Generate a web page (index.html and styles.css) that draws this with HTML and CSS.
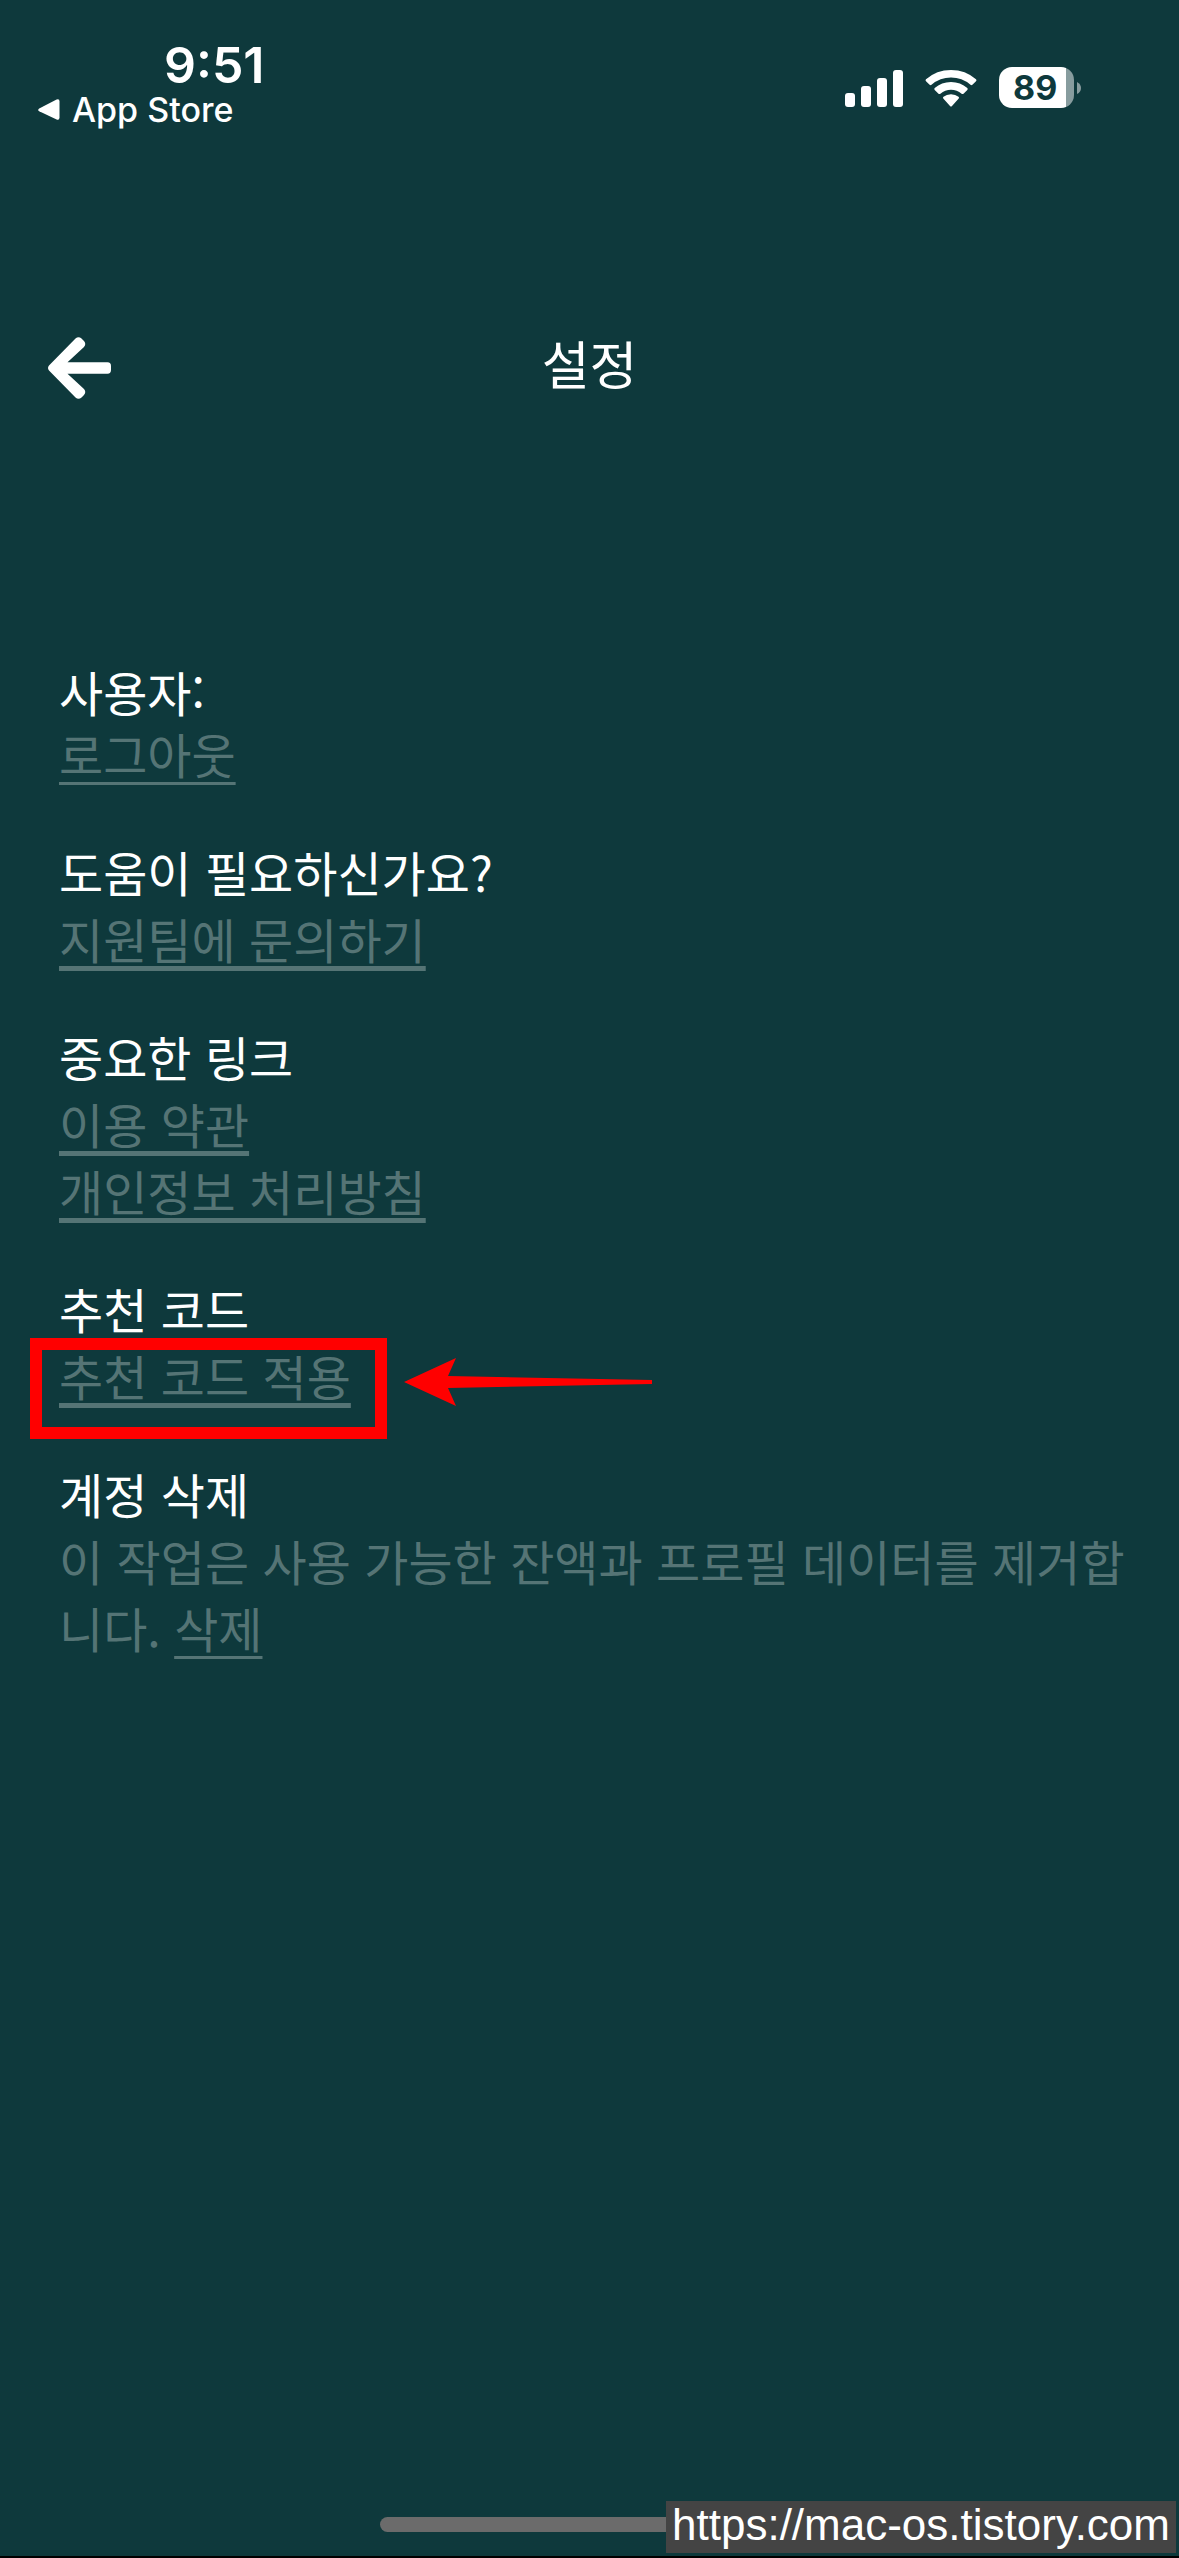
FILE: index.html
```html
<!DOCTYPE html>
<html lang="ko">
<head>
<meta charset="utf-8">
<meta name="viewport" content="width=device-width, initial-scale=1">
<title>설정</title>
<link rel="stylesheet" href="styles.css">
</head>
<body>
<div class="screen">
  <div class="status">
    <div class="status-left">
      <span class="time">9:51</span>
      <a class="return" href="#">
        <svg width="22" height="22" viewBox="0 0 22 22" aria-hidden="true"><path d="M1.2 9.6 18.6.6Q21.5-.4 21.5 2.400V18.600Q21.500 21.600 18.600 20.600L1.200 12.200Q-.8 10.900 1.200 9.600Z" fill="#fff"/></svg>
        <span>App Store</span>
      </a>
    </div>
    <div class="status-right">
      <svg width="58" height="38" viewBox="0 0 58 38" aria-hidden="true" fill="#fff">
        <rect x="0" y="24" width="10" height="14" rx="3"/>
        <rect x="16" y="17" width="10" height="21" rx="3"/>
        <rect x="32" y="9" width="10" height="29" rx="3"/>
        <rect x="48" y="1" width="10" height="37" rx="3"/>
      </svg>
      <svg width="52" height="38" viewBox="0 0 52 38" aria-hidden="true" fill="#fff">
        <path d="M1 10.300Q11.500 1 26 1T51 10.300Q52 11.300 51 12.300L47.400 15.800Q46.500 16.600 45.500 15.700Q37 8.500 26 8.500T6.500 15.700Q5.500 16.600 4.600 15.800L1 12.300Q0 11.300 1 10.300Z"/>
        <path d="M9.700 19Q16.500 13 26 13T42.300 19Q43.200 20 42.300 21L38.500 24.700Q37.600 25.500 36.600 24.700Q32 20.800 26 20.800T15.400 24.700Q14.400 25.500 13.500 24.700L9.700 21Q8.800 20 9.700 19Z"/>
        <path d="M18.500 27.700Q21.500 25.200 26 25.200T33.500 27.700Q34.500 28.700 33.500 29.700L27 37Q26 38.200 25 37L18.500 29.700Q17.500 28.700 18.500 27.700Z"/>
      </svg>
      <div class="battery">
        <span class="battery-level">89</span>
        <svg class="battery-cap" width="4" height="12" viewBox="0 0 4 12" aria-hidden="true"><path d="M0 0Q4 2 4 6T0 12Z" fill="#879c9e"/></svg>
      </div>
    </div>
  </div>

  <header class="header">
    <button class="back" type="button" aria-label="뒤로">
      <svg width="64" height="62" viewBox="0 0 64 62" aria-hidden="true"><path d="M1 28.500 27.500 1.500Q30.500-1 33.500 1.500L36 4Q38.500 7 36 10L19.500 25.300H59.500Q63 25.300 63 29V33Q63 36.700 59.500 36.700H19.500L36 52Q38.500 55 36 58L33.500 60.500Q30.500 63 27.500 60.500L1 33.500Q-1 31 1 28.500Z" fill="#fff"/></svg>
    </button>
    <h1 class="title">설정</h1>
  </header>

  <main class="content">
    <section class="group">
      <h2 class="label label-user">사용자:</h2>
      <a class="link link-thin" href="#">로그아웃</a>
    </section>
    <section class="group">
      <h2 class="label">도움이 필요하신가요?</h2>
      <a class="link" href="#">지원팀에 문의하기</a>
    </section>
    <section class="group">
      <h2 class="label">중요한 링크</h2>
      <a class="link" href="#">이용 약관</a>
      <a class="link" href="#">개인정보 처리방침</a>
    </section>
    <section class="group">
      <h2 class="label">추천 코드</h2>
      <div class="marked">
        <a class="link" href="#">추천 코드 적용</a>
        <span class="mark-box"></span>
        <svg class="mark-arrow" width="248" height="48" viewBox="0 0 248 48" aria-hidden="true"><path d="M0 24 52 0 44 18 248 22V26L44 30 52 48Z" fill="#f00"/></svg>
      </div>
    </section>
    <section class="group">
      <h2 class="label">계정 삭제</h2>
      <p class="note">이 작업은 사용 가능한 잔액과 프로필 데이터를 제거합니다. <a class="note-link" href="#">삭제</a></p>
    </section>
  </main>

  <div class="home-bar"></div>
  <div class="watermark">https://mac-os.tistory.com</div>
</div>
</body>
</html>
```
FILE: styles.css
```css
* {
  box-sizing: border-box;
}

body {
  margin: 0;
  background: #0e393c;
  color: #fff;
  font-family: "Noto Sans CJK KR", sans-serif;
  font-size: 48px;
}

.screen {
  position: relative;
  display: flex;
  flex-direction: column;
  min-height: 100vh;
  border-bottom: 2px solid #000;
}

.status {
  display: flex;
  justify-content: space-between;
  padding: 40px 98px 0 38px;
  font-family: Inter, sans-serif;
}

.status-left {
  display: flex;
  flex-direction: column;
}

.time {
  padding-left: 126px;
  font-size: 50px;
  font-weight: 600;
  line-height: 50px;
}

.return {
  display: flex;
  align-items: center;
  gap: 12px;
  color: #fff;
  font-size: 34px;
  font-weight: 500;
  line-height: 40px;
  text-decoration: none;
}

.status-right {
  display: flex;
  align-items: center;
  align-self: flex-start;
  gap: 22px;
  padding-top: 27px;
}

.battery {
  display: flex;
  align-items: center;
  gap: 3px;
}

.battery-level {
  width: 75px;
  height: 41px;
  padding-left: 14px;
  border-radius: 13px;
  background: linear-gradient(to right, #fff 67px, #879c9e 67px);
  color: #0e393c;
  font-size: 34px;
  font-weight: 700;
  line-height: 41px;
}

.header {
  display: grid;
  grid-template-columns: 1fr auto 1fr;
  align-items: center;
  margin-top: 193px;
  padding: 0 48px;
}

.back {
  display: flex;
  justify-self: start;
  padding: 10px 0 0;
  border: 0;
  background: none;
}

.title {
  margin: 0;
  font-size: 52px;
  font-weight: 400;
  line-height: 80px;
}

.content {
  display: flex;
  flex-direction: column;
  gap: 51px;
  padding: 260px 50px 0 59px;
}

.group {
  display: flex;
  flex-direction: column;
  align-items: flex-start;
  line-height: 67px;
}

.label {
  margin: 0;
  font-size: 48px;
  font-weight: 400;
}

.label-user {
  line-height: 57px;
}

.link,
.note-link {
  color: #557475;
  text-decoration: underline 5px;
  text-decoration-skip-ink: none;
  text-underline-offset: 7px;
}

.link-thin,
.note-link {
  text-decoration-thickness: 3px;
  text-underline-offset: 8px;
}

.note {
  margin: 0;
  color: #557475;
}

.marked {
  position: relative;
}

.mark-box {
  position: absolute;
  top: -4px;
  left: -29px;
  width: 357px;
  height: 101px;
  border: 12px solid #f00;
}

.mark-arrow {
  position: absolute;
  top: 16px;
  left: 345px;
}

.home-bar {
  width: 419px;
  height: 15px;
  margin: auto auto 24px;
  border-radius: 8px;
  background: #6b6b6b;
}

.watermark {
  position: absolute;
  right: 3px;
  bottom: 3px;
  padding: 0 6px 4px;
  background: #444;
  font-family: "Liberation Sans", Arial, sans-serif;
  font-size: 44px;
  line-height: 48px;
}
```
